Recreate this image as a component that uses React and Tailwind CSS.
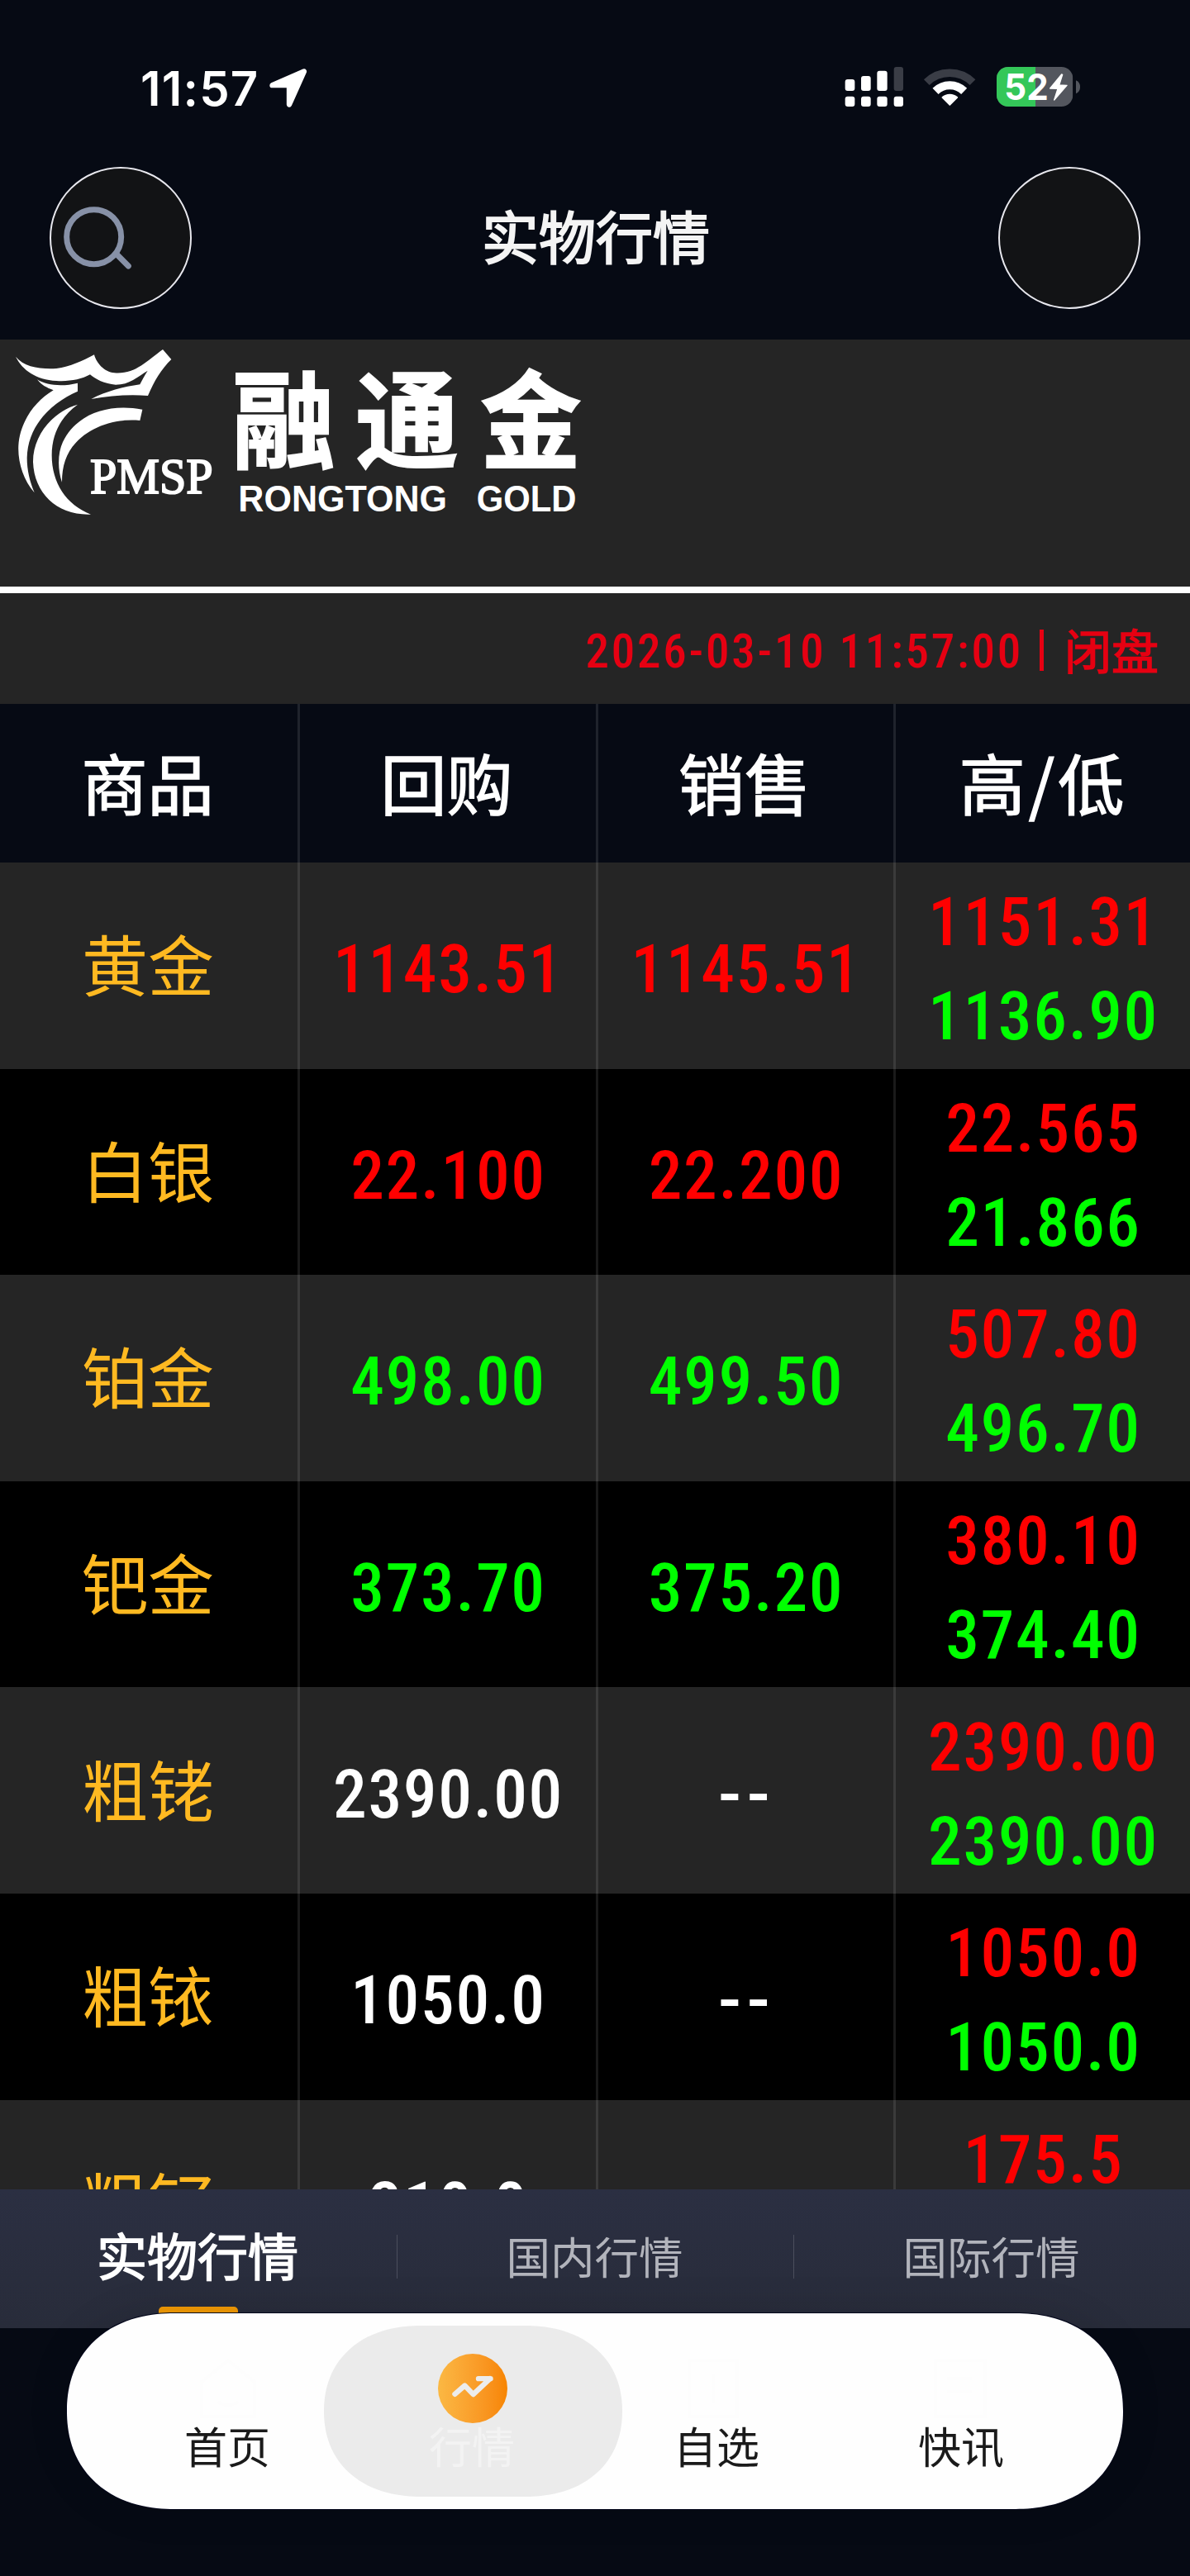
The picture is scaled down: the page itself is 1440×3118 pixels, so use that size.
const UP = "text-[#ff0000]";
const DOWN = "text-[#00ff00]";
const FLAT = "text-white";

const rows = [
  { name: "黄金", buy: "1143.51", sell: "1145.51", high: "1151.31", low: "1136.90", tone: UP },
  { name: "白银", buy: "22.100", sell: "22.200", high: "22.565", low: "21.866", tone: UP },
  { name: "铂金", buy: "498.00", sell: "499.50", high: "507.80", low: "496.70", tone: DOWN },
  { name: "钯金", buy: "373.70", sell: "375.20", high: "380.10", low: "374.40", tone: DOWN },
  { name: "粗铑", buy: "2390.00", sell: "--", high: "2390.00", low: "2390.00", tone: FLAT },
  { name: "粗铱", buy: "1050.0", sell: "--", high: "1050.0", low: "1050.0", tone: FLAT },
  { name: "粗钌", buy: "210.0", sell: "--", high: "175.5", low: "175.5", tone: FLAT },
];

const COLS = "grid grid-cols-[363px_361px_360px_356px]";

function StatusBar() {
  return (
    <div className="flex h-[180px] items-start justify-between pl-[170px] pr-[130px]">
      <div className="flex items-start pt-[72px]">
        <span className="w-[140px] whitespace-nowrap font-['Inter'] text-[58px] font-semibold leading-[70px] tracking-[1.2px] text-white">
          11:57
        </span>
        <svg className="ml-[14px] mt-[10px]" width="50" height="50" viewBox="0 0 150 150">
          <path d="M11 64 L131 12 L75 137 L75 64 Z" fill="#fff" stroke="#fff" strokeWidth="20" strokeLinejoin="round" transform="translate(6 2) scale(.96)" />
        </svg>
      </div>
      <svg className="mt-[75px]" width="290" height="60" viewBox="180 75 870 180">
        <g fill="#fff">
          <rect x="188" y="138" width="35" height="42" rx="9" />
          <rect x="246" y="126" width="35" height="54" rx="9" />
          <rect x="304" y="107" width="37" height="73" rx="9" />
          <rect x="188" y="200" width="35" height="37" rx="9" />
          <rect x="246" y="200" width="35" height="37" rx="9" />
          <rect x="304" y="200" width="37" height="37" rx="9" />
          <rect x="365" y="200" width="34" height="37" rx="9" />
        </g>
        <rect x="365" y="93" width="34" height="87" rx="9" fill="#3a3d46" />
        <path d="M484 149 A119 119 0 0 1 651 149" fill="none" stroke="#3a3d46" strokeWidth="29" />
        <path d="M516 181 A74 74 0 0 1 620 181" fill="none" stroke="#fff" strokeWidth="30" />
        <path d="M568 231 L541 204 A41 41 0 0 1 595 204 Z" fill="#fff" stroke="#fff" strokeWidth="5" strokeLinejoin="round" />
        <clipPath id="battery">
          <rect x="738" y="93" width="277" height="144" rx="42" />
        </clipPath>
        <g clipPath="url(#battery)">
          <rect x="738" y="93" width="277" height="144" fill="#53565e" />
          <rect x="738" y="93" width="141" height="144" fill="#34c759" />
        </g>
        <path d="M1026 142 Q1041 148 1041 166 Q1041 184 1026 190 Z" fill="#53565e" />
        <text x="766" y="213" fontFamily="Inter" fontWeight="700" fontSize="131" textLength="160" lengthAdjust="spacingAndGlyphs" fill="#fff">52</text>
        <path d="M974 120 L932 171 L960 172 L947 213 L993 160 L965 159 L977 121 Z" fill="#fff" stroke="#fff" strokeWidth="4" strokeLinejoin="round" />
      </svg>
    </div>
  );
}

function TitleBar() {
  return (
    <div className="flex h-[231px] items-start justify-between px-[60px] pt-[22px]">
      <div className="flex size-[172px] items-center rounded-full border-2 border-[#e8e8ee] bg-[#121315] pl-[14px]">
        <svg width="86" height="80" viewBox="0 0 258 240">
          <g fill="none" stroke="#8791a7" strokeWidth="21">
            <circle cx="113" cy="116" r="99" />
            <path d="M194 178 L238 222" strokeLinecap="round" />
          </g>
        </svg>
      </div>
      <h1 className="ml-[2px] mt-[46px] whitespace-nowrap font-['Noto_Sans_CJK_SC'] text-[69px] leading-[72px] text-[#f4f4f4] [-webkit-text-stroke:2px_#f4f4f4]">
        实物行情
      </h1>
      <div className="size-[172px] rounded-full border-2 border-[#e8e8ee] bg-[#121315]" />
    </div>
  );
}

function Logo() {
  return (
    <svg width="720" height="230" viewBox="0 0 2160 690" fill="#fff">
      <path d="M57 62 C88 100 145 108 205 105 C255 99 300 77 342 55 C350 85 378 118 415 121 C490 127 530 80 591 36 L622 72 C585 108 560 150 537 204 C470 198 400 204 331 216 C385 188 450 171 508 163 C516 147 526 129 536 113 C500 135 470 164 420 164 C380 162 345 143 327 127 C295 145 250 153 205 150 C130 145 82 112 57 62 Z" />
      <path d="M135 145 C170 168 230 171 282 158 L282 188 C190 228 100 310 98 430 C98 475 108 515 125 556 C85 510 64 445 67 385 C72 300 125 225 194 184 C170 175 150 165 135 145 Z" />
      <path d="M282 236 C190 262 119 350 120 445 C124 560 210 640 330 635 C240 600 188 520 188 420 C188 345 220 280 282 236 Z" />
      <path d="M517 254 L508 294 C420 286 330 315 275 375 C240 412 225 460 225 518 C208 470 210 410 228 372 C275 275 385 230 517 254 Z" />
      <text x="327" y="559" fontFamily="Liberation Serif" fontSize="186" textLength="446" lengthAdjust="spacingAndGlyphs" stroke="#fff" strokeWidth="6">PMSP</text>
      <g fontFamily="Noto Sans CJK SC" fontWeight="700" fontSize="386" stroke="#fff" strokeWidth="6">
        <text x="843" y="439" textLength="374" lengthAdjust="spacingAndGlyphs">融</text>
        <text x="1291" y="439" textLength="374" lengthAdjust="spacingAndGlyphs">通</text>
        <text x="1744" y="439" textLength="366" lengthAdjust="spacingAndGlyphs">金</text>
      </g>
      <g fontFamily="Liberation Sans" fontWeight="700" fontSize="134">
        <text x="865" y="624" textLength="758" lengthAdjust="spacingAndGlyphs">RONGTONG</text>
        <text x="1730" y="624" textLength="362" lengthAdjust="spacingAndGlyphs">GOLD</text>
      </g>
    </svg>
  );
}

function Num({ children, tone }) {
  const dash = children === "--";
  return (
    <span
      className={`block whitespace-nowrap pl-px font-['Roboto_Condensed'] text-[81.5px] font-medium leading-[114px] ${dash ? "scale-x-[1.15] tracking-[5px]" : "tracking-[1.7px]"} ${tone}`}
    >
      {children}
    </span>
  );
}

function HeadCell({ children }) {
  return <div className="flex items-center justify-center border-r-[3px] border-white/10 pb-[7px] pr-[3px] last:border-r-0">{children}</div>;
}

function Row({ row, odd }) {
  const cell = "flex flex-col items-center justify-center border-r-[3px] border-white/10 pt-[9px] last:border-r-0";
  return (
    <div className={`${COLS} h-[249.6px] shrink-0 ${odd ? "bg-black" : "bg-[#252525]"}`}>
      <div className="flex items-center justify-center border-r-[3px] border-white/10 pb-[9px] pr-[2px] font-['Noto_Sans_CJK_SC'] text-[80px] leading-none text-[#ffb921]">
        {row.name}
      </div>
      <div className={cell}><Num tone={row.tone}>{row.buy}</Num></div>
      <div className={cell}><Num tone={row.tone}>{row.sell}</Num></div>
      <div className={cell}>
        <Num tone={UP}>{row.high}</Num>
        <Num tone={DOWN}>{row.low}</Num>
      </div>
    </div>
  );
}

function Tabs() {
  return (
    <div className="flex h-[168px] items-start bg-linear-to-b from-[#2b2f42] to-[#282c3a] font-['Noto_Sans_CJK_SC']">
      <div className="flex h-[150px] w-[480px] flex-col items-center pt-[47px]">
        <span className="pr-[2px] text-[61px] leading-[64px] text-white [-webkit-text-stroke:1.6px_white]">实物行情</span>
        <span className="mt-[31px] h-[12px] w-[96px] shrink-0 rounded-t-[5px] bg-[#f29a05]" />
      </div>
      <div className="mt-[55px] h-[53px] w-px bg-[#4b4e5d]" />
      <div className="flex w-[479px] justify-center pr-[2px] pt-[47px] text-[53.5px] leading-[66px] text-[#b2b4bc]">国内行情</div>
      <div className="mt-[55px] h-[53px] w-px bg-[#4b4e5d]" />
      <div className="flex w-[479px] justify-center pr-[2px] pt-[47px] text-[53.5px] leading-[66px] text-[#b2b4bc]">国际行情</div>
    </div>
  );
}

function NavItem({ label, active, children }) {
  return (
    <div className={`relative flex w-[296px] flex-col items-center pt-[49px] ${active ? "text-[#f3f3f3]" : "text-[#1a1a1a]"}`}>
      {active && <div className="absolute left-[-32px] top-[15px] h-[207px] w-[361px] rounded-[118px/104px] bg-[#ebebeb] [corner-shape:superellipse(1.14)]" />}
      <div className="relative size-[84px]">{children}</div>
      <span className="relative mt-[-1px] pr-[2px] font-['Noto_Sans_CJK_SC'] text-[52px] leading-[56px]">{label}</span>
    </div>
  );
}

function BottomNav() {
  const faint = { width: 84, height: 84, viewBox: "0 0 84 84", fill: "none", stroke: "#fdfdfd", strokeWidth: 4 };
  return (
    <nav className="relative mx-auto mt-[-18px] flex h-[237px] w-[1278px] justify-center rounded-[130px/118px] bg-[#fefefe] shadow-[0_0_0_1px_#05081c,0_0_50px_rgba(0,0,0,0.12)] [corner-shape:superellipse(1.14)]">
      <NavItem label="首页">
        <svg {...faint}><path d="M10 34 L42 8 L74 34 V76 H10 Z M30 58 Q42 66 54 58" /></svg>
      </NavItem>
      <NavItem label="行情" active>
        <div className="flex size-[84px] items-center justify-center rounded-full bg-linear-to-r from-[#fbb843] to-[#f78500]">
          <svg width="84" height="84" viewBox="510 207 252 253">
            <path d="M571 354 L607 323 L638 355 L699 298 M657 298 H701" fill="none" stroke="#ececec" strokeWidth="19" strokeLinecap="round" strokeLinejoin="round" />
          </svg>
        </div>
      </NavItem>
      <NavItem label="自选">
        <svg {...faint}><path d="M8 8 H66 V76 H8 Z M37 24 V60" /></svg>
      </NavItem>
      <NavItem label="快讯">
        <svg {...faint}><path d="M10 8 H70 V76 H10 Z M24 30 H54 M24 46 H54" /></svg>
      </NavItem>
    </nav>
  );
}

export default function App() {
  return (
    <div className="h-[3118px] w-[1440px] overflow-hidden bg-[#060a14]">
      <StatusBar />
      <TitleBar />
      <div className="h-[299px] bg-[#252525]">
        <Logo />
      </div>
      <div className="h-[8px] bg-white" />
      <div className="flex h-[134px] items-center justify-end bg-[#252525] pr-[38px] text-[#e60012]">
        <span className="whitespace-nowrap pt-[6px] font-['Roboto_Condensed'] text-[57px] font-medium leading-none tracking-[2.8px]">
          2026-03-10 11:57:00
        </span>
        <span className="ml-[20px] mt-[4px] h-[50px] w-[5px] bg-[#e60012]" />
        <span className="ml-[25px] font-['Noto_Sans_CJK_SC'] text-[57px] leading-none [-webkit-text-stroke:1.5px_#e60012]">闭盘</span>
      </div>
      <div className={`${COLS} h-[192px] font-['Noto_Sans_CJK_SC'] text-[80px] leading-none text-white [-webkit-text-stroke:1.5px_white]`}>
        <HeadCell>商品</HeadCell>
        <HeadCell>回购</HeadCell>
        <HeadCell>销售</HeadCell>
        <HeadCell>高<span className="mx-[4px]">/</span>低</HeadCell>
      </div>
      <div className="flex h-[1606px] flex-col overflow-hidden">
        {rows.map((row, i) => (
          <Row key={row.name} row={row} odd={i % 2 === 1} />
        ))}
      </div>
      <Tabs />
      <BottomNav />
    </div>
  );
}
